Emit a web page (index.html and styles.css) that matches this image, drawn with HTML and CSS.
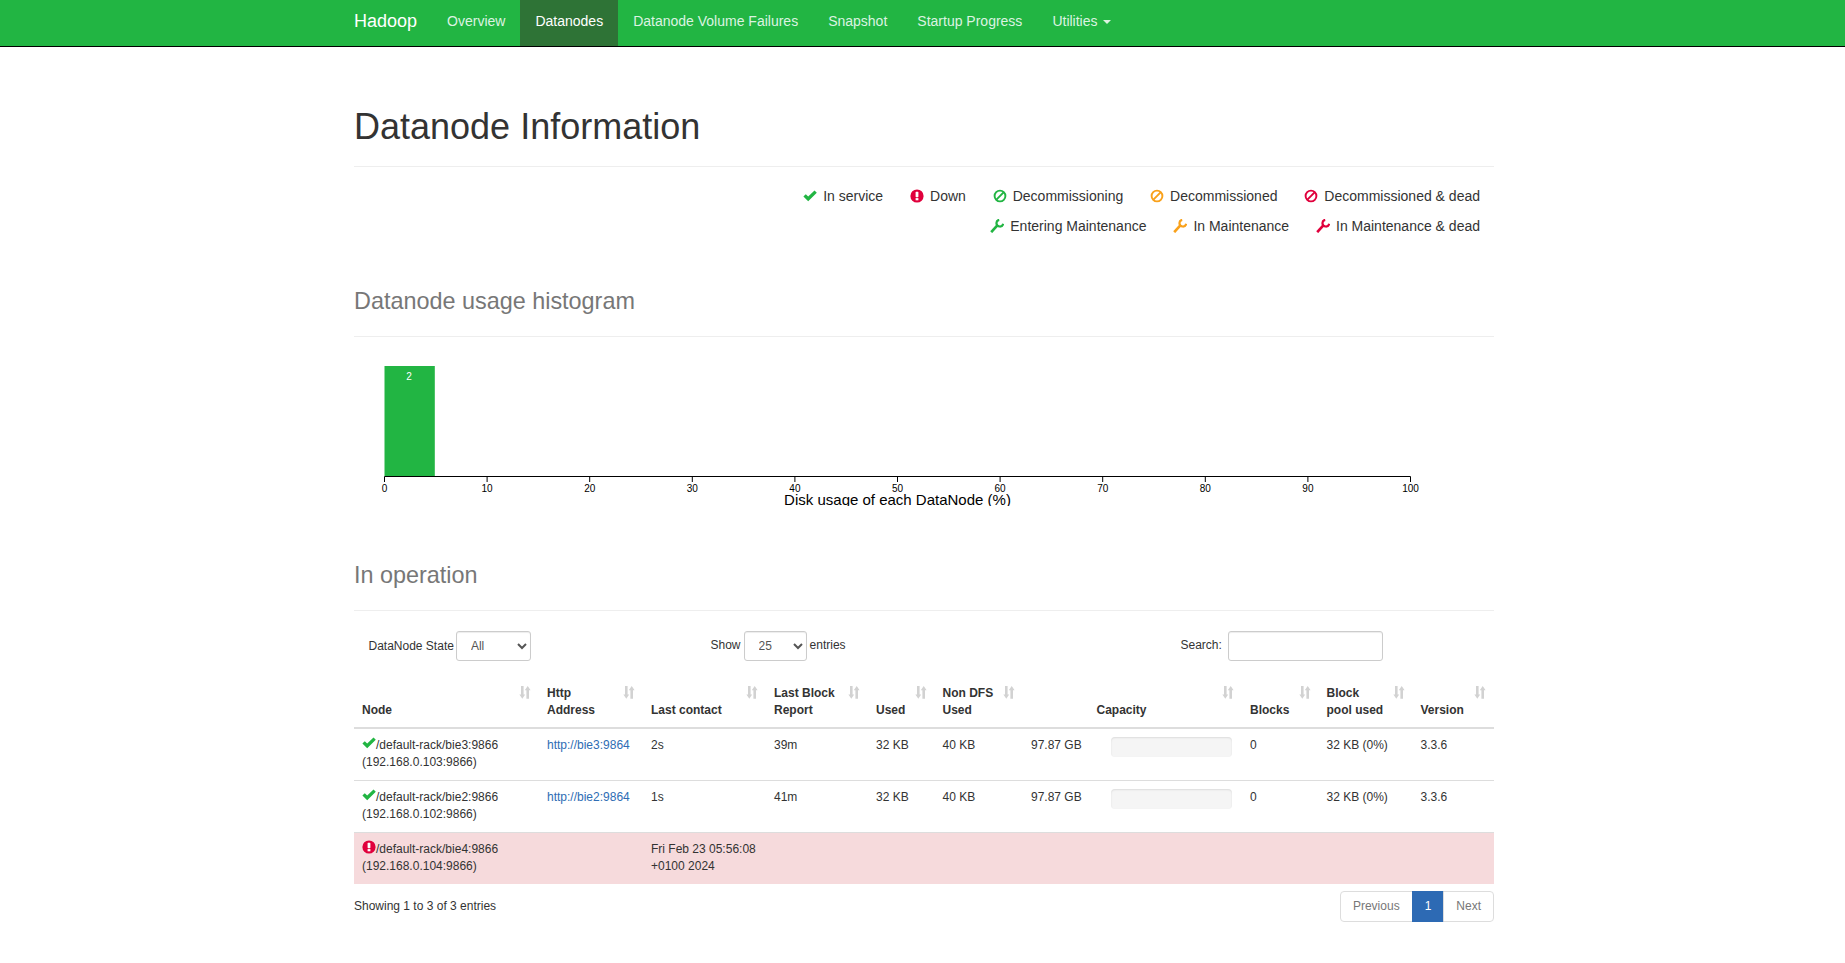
FILE: index.html
```html
<!DOCTYPE html>
<html lang="en">
<head>
    <meta charset="UTF-8">
    <title>Namenode information</title>
    <link rel="stylesheet" href="styles.css">
</head>
<body>
    <svg class="icon-defs" width="0" height="0">
        <defs>
            <symbol id="i-ok" viewBox="0 0 14 14"><path fill="currentColor" d="M0.4 7.6 2.8 5.2 5.2 7.6 11.5 1.4 13.8 3.7 5.2 12.3z"/></symbol>
            <symbol id="i-down" viewBox="0 0 14 14"><circle fill="currentColor" cx="7" cy="7" r="6.6"/><rect fill="#fff" x="5.6" y="2.8" width="2.8" height="5.4" rx="0.6"/><rect fill="#fff" x="5.6" y="9.1" width="2.8" height="2.2"/></symbol>
            <symbol id="i-ban" viewBox="0 0 14 14"><circle fill="none" stroke="currentColor" stroke-width="1.9" cx="7" cy="7" r="5.4"/><path stroke="currentColor" stroke-width="2" d="M10.6 3.4 3.4 10.6"/></symbol>
            <symbol id="i-wrench" viewBox="0 0 14 14"><path fill="none" stroke="currentColor" stroke-width="2.6" d="M1.2 13.2 7.8 5.8"/><path fill="none" stroke="currentColor" stroke-width="2.2" d="M9.2 0.8A3.4 3.4 0 1 0 13.2 4.8"/></symbol>
            <symbol id="i-sort" viewBox="0 0 12 13"><path fill="currentColor" d="M2 0H4.6V8.5H6.2L3.3 12.8 0.4 8.5H2zM7.4 12.8H10V4.2H11.6L8.7 0 5.8 4.2H7.4z"/></symbol>
        </defs>
    </svg>

    <nav class="navbar">
        <div class="navbar-inner">
            <a class="brand" href="#">Hadoop</a>
            <ul class="nav">
                <li><a href="#">Overview</a></li>
                <li class="active"><a href="#">Datanodes</a></li>
                <li><a href="#">Datanode Volume Failures</a></li>
                <li><a href="#">Snapshot</a></li>
                <li><a href="#">Startup Progress</a></li>
                <li><a href="#">Utilities <span class="caret"></span></a></li>
            </ul>
        </div>
    </nav>

    <div class="container">
        <div class="page-header first">
            <h1>Datanode Information</h1>
        </div>

        <ul class="legend">
            <li><svg class="icon c-green"><use href="#i-ok"/></svg>In service</li>
            <li><svg class="icon c-red"><use href="#i-down"/></svg>Down</li>
            <li><svg class="icon c-green"><use href="#i-ban"/></svg>Decommissioning</li>
            <li><svg class="icon c-orange"><use href="#i-ban"/></svg>Decommissioned</li>
            <li><svg class="icon c-red"><use href="#i-ban"/></svg>Decommissioned &amp; dead</li>
            <br>
            <li><svg class="icon c-green"><use href="#i-wrench"/></svg>Entering Maintenance</li>
            <li><svg class="icon c-orange"><use href="#i-wrench"/></svg>In Maintenance</li>
            <li><svg class="icon c-red"><use href="#i-wrench"/></svg>In Maintenance &amp; dead</li>
        </ul>

        <div class="page-header histogram-head">
            <h1><small>Datanode usage histogram</small></h1>
        </div>

        <svg class="histogram" width="1140" height="160">
            <rect class="bar" x="30.5" y="20" width="50.3" height="110"/>
            <text class="bar-value" x="55" y="34">2</text>
            <path class="axis" d="M30.5 136V130.5H1056.5V136"/>
            <g class="ticks">
                <path d="M133.1 130V136M235.7 130V136M338.3 130V136M440.9 130V136M543.5 130V136M646.1 130V136M748.7 130V136M851.3 130V136M953.9 130V136"/>
            </g>
            <g class="tick-labels">
                <text x="30.5" y="146">0</text>
                <text x="133.1" y="146">10</text>
                <text x="235.7" y="146">20</text>
                <text x="338.3" y="146">30</text>
                <text x="440.9" y="146">40</text>
                <text x="543.5" y="146">50</text>
                <text x="646.1" y="146">60</text>
                <text x="748.7" y="146">70</text>
                <text x="851.3" y="146">80</text>
                <text x="953.9" y="146">90</text>
                <text x="1056.5" y="146">100</text>
            </g>
            <text class="axis-label" x="543.5" y="159">Disk usage of each DataNode (%)</text>
        </svg>

        <div class="page-header operation">
            <h1><small>In operation</small></h1>
        </div>

        <div class="toolbar">
            <label class="state-filter">DataNode State
                <select class="form-control state-select"><option>All</option></select>
            </label>
            <label class="length-filter">Show
                <select class="form-control length-select"><option>25</option></select>
                entries
            </label>
            <label class="search-filter">Search:
                <input class="form-control search-input" type="search">
            </label>
        </div>

        <table class="nodes">
            <colgroup>
                <col class="w-node"><col class="w-http"><col class="w-contact"><col class="w-report"><col class="w-used">
                <col class="w-nondfs"><col class="w-cap1"><col class="w-cap2"><col class="w-blocks"><col class="w-pool"><col class="w-version">
            </colgroup>
            <thead>
                <tr>
                    <th>Node<svg class="sort"><use href="#i-sort"/></svg></th>
                    <th>Http<br>Address<svg class="sort"><use href="#i-sort"/></svg></th>
                    <th>Last contact<svg class="sort"><use href="#i-sort"/></svg></th>
                    <th>Last Block<br>Report<svg class="sort"><use href="#i-sort"/></svg></th>
                    <th>Used<svg class="sort"><use href="#i-sort"/></svg></th>
                    <th>Non DFS<br>Used<svg class="sort"><use href="#i-sort"/></svg></th>
                    <th class="capacity-head" colspan="2">Capacity<svg class="sort"><use href="#i-sort"/></svg></th>
                    <th>Blocks<svg class="sort"><use href="#i-sort"/></svg></th>
                    <th>Block<br>pool used<svg class="sort"><use href="#i-sort"/></svg></th>
                    <th>Version<svg class="sort"><use href="#i-sort"/></svg></th>
                </tr>
            </thead>
            <tbody>
                <tr>
                    <td><svg class="icon-cell c-green"><use href="#i-ok"/></svg>/default-rack/bie3:9866<br>(192.168.0.103:9866)</td>
                    <td><a href="#">http://bie3:9864</a></td>
                    <td>2s</td>
                    <td>39m</td>
                    <td>32 KB</td>
                    <td>40 KB</td>
                    <td>97.87 GB</td>
                    <td><div class="progress"></div></td>
                    <td>0</td>
                    <td>32 KB (0%)</td>
                    <td>3.3.6</td>
                </tr>
                <tr>
                    <td><svg class="icon-cell c-green"><use href="#i-ok"/></svg>/default-rack/bie2:9866<br>(192.168.0.102:9866)</td>
                    <td><a href="#">http://bie2:9864</a></td>
                    <td>1s</td>
                    <td>41m</td>
                    <td>32 KB</td>
                    <td>40 KB</td>
                    <td>97.87 GB</td>
                    <td><div class="progress"></div></td>
                    <td>0</td>
                    <td>32 KB (0%)</td>
                    <td>3.3.6</td>
                </tr>
                <tr class="danger">
                    <td><svg class="icon-cell c-red"><use href="#i-down"/></svg>/default-rack/bie4:9866<br>(192.168.0.104:9866)</td>
                    <td></td>
                    <td colspan="2">Fri Feb 23 05:56:08<br>+0100 2024</td>
                    <td></td>
                    <td></td>
                    <td></td>
                    <td></td>
                    <td></td>
                    <td></td>
                    <td></td>
                </tr>
            </tbody>
        </table>

        <div class="table-foot">
            <div class="info">Showing 1 to 3 of 3 entries</div>
            <ul class="pagination">
                <li><a href="#">Previous</a></li>
                <li class="active"><a href="#">1</a></li>
                <li><a href="#">Next</a></li>
            </ul>
        </div>
    </div>
</body>
</html>
```

FILE: styles.css
```css
* {
    box-sizing: border-box;
}

body {
    margin: 0;
    font-family: "Liberation Sans", Arial, sans-serif;
    font-size: 14px;
    line-height: 1.42857;
    color: #333;
    background: #fff;
}

a {
    text-decoration: none;
}

.icon-defs {
    position: absolute;
}

/* navbar */
.navbar {
    height: 47px;
    background: #22b543;
    border-bottom: 1px solid #000;
}

.navbar-inner {
    display: flex;
    margin-left: 339px;
}

.brand {
    padding: 11px 15px;
    font-size: 18px;
    line-height: 20px;
    color: #fff;
}

.nav {
    display: flex;
    margin: 0;
    padding: 0;
    list-style: none;
}

.nav a {
    display: block;
    padding: 11px 15px 15px;
    line-height: 20px;
    height: 46px;
    color: #dcf3e1;
}

.nav .active a {
    background: #2e7336;
    color: #fff;
}

.caret {
    display: inline-block;
    width: 0;
    height: 0;
    margin-left: 2px;
    vertical-align: middle;
    border-top: 4px solid;
    border-left: 4px solid transparent;
    border-right: 4px solid transparent;
}

/* page */
.container {
    width: 1140px;
    margin-left: 354px;
}

.page-header {
    padding-bottom: 9px;
    border-bottom: 1px solid #eee;
}

.page-header.first {
    margin: 60px 0 15.5px;
}

.page-header.histogram-head {
    margin: 35px 0 9px;
}

.page-header.operation {
    margin: 45.5px 0 19.5px;
}

h1 {
    margin: 0 0 10px;
    font-size: 36px;
    font-weight: 500;
    line-height: 1.1;
}

h1 small {
    font-size: 65%;
    font-weight: 400;
    color: #777;
}

/* legend */
.legend {
    margin: 0;
    padding: 0 2.5px 0 0;
    list-style: none;
    text-align: right;
}

.legend li {
    display: inline-block;
    padding: 5px 11.5px;
}

.icon {
    width: 14px;
    height: 14px;
    margin-right: 6px;
    vertical-align: -2px;
}

.c-green {
    color: #22b543;
}

.c-red {
    color: #e0003c;
}

.c-orange {
    color: #f9a11b;
}

/* histogram */
.histogram {
    display: block;
}

.bar {
    fill: #22b543;
}

.bar-value {
    font-size: 10px;
    fill: #fff;
    text-anchor: middle;
}

.axis,
.ticks path {
    fill: none;
    stroke: #000;
    stroke-width: 1px;
}

.tick-labels text {
    font-size: 10px;
    fill: #000;
    text-anchor: middle;
}

.axis-label {
    font-size: 15px;
    fill: #000;
    text-anchor: middle;
}

/* table controls */
.toolbar {
    display: grid;
    grid-template-columns: 342px 470px auto;
    align-items: center;
    padding-left: 14.5px;
    height: 30px;
    font-size: 12px;
    margin-bottom: 16.5px;
}

.toolbar label {
    display: flex;
    align-items: center;
    font-weight: 400;
}

.state-filter {
    padding-top: 1px;
}

.form-control {
    height: 30px;
    padding: 5px 10px;
    font-family: inherit;
    font-size: 12px;
    color: #555;
    background: #fff;
    border: 1px solid #ccc;
    border-radius: 3px;
    box-shadow: inset 0 1px 1px rgba(0, 0, 0, .075);
}

.state-select {
    width: 75px;
    margin-left: 2px;
}

.length-select {
    width: 63px;
    margin: 0 3px 0 3px;
}

.search-input {
    width: 155px;
    margin-left: 6px;
}

/* table */
.nodes {
    width: 1140px;
    table-layout: fixed;
    border-collapse: collapse;
    font-size: 12px;
}

.w-node { width: 185px; }
.w-http { width: 104px; }
.w-contact { width: 123px; }
.w-report { width: 102px; }
.w-used { width: 66.5px; }
.w-nondfs { width: 88.5px; }
.w-cap1 { width: 80px; }
.w-cap2 { width: 139px; }
.w-blocks { width: 76.5px; }
.w-pool { width: 94px; }
.w-version { width: 81.5px; }

.nodes th {
    position: relative;
    padding: 8px 8px 7.5px;
    text-align: left;
    vertical-align: bottom;
    border-bottom: 2px solid #ddd;
}

.nodes th.capacity-head {
    padding-right: 30px;
    text-align: center;
}

.sort {
    position: absolute;
    top: 9px;
    right: 8px;
    width: 12px;
    height: 13px;
    color: #d2d2d2;
}

.nodes td {
    padding: 8.4px 8px 8.4px;
    vertical-align: top;
    border-top: 1px solid #ddd;
}

.nodes a {
    color: #2e6db4;
}

.icon-cell {
    width: 14px;
    height: 14px;
    margin-top: -2px;
    vertical-align: -1px;
}

.danger td {
    background: #f6dadc;
}

.progress {
    height: 20px;
    margin-right: 2px;
    background: #f5f5f5;
    border-radius: 4px;
    box-shadow: inset 0 1px 2px rgba(0, 0, 0, .1);
}

/* footer */
.table-foot {
    display: flex;
    justify-content: space-between;
    align-items: center;
    margin-top: 7.5px;
    font-size: 12px;
}

.pagination {
    display: flex;
    margin: 0;
    padding: 0;
    list-style: none;
}

.pagination a {
    display: block;
    padding: 6px 12px;
    margin-left: -1px;
    color: #777;
    background: #fff;
    border: 1px solid #ddd;
}

.pagination li:first-child a {
    border-radius: 4px 0 0 4px;
}

.pagination li:last-child a {
    border-radius: 0 4px 4px 0;
}

.pagination .active a {
    color: #fff;
    background: #2d6ab4;
    border-color: #2d6ab4;
}
```
